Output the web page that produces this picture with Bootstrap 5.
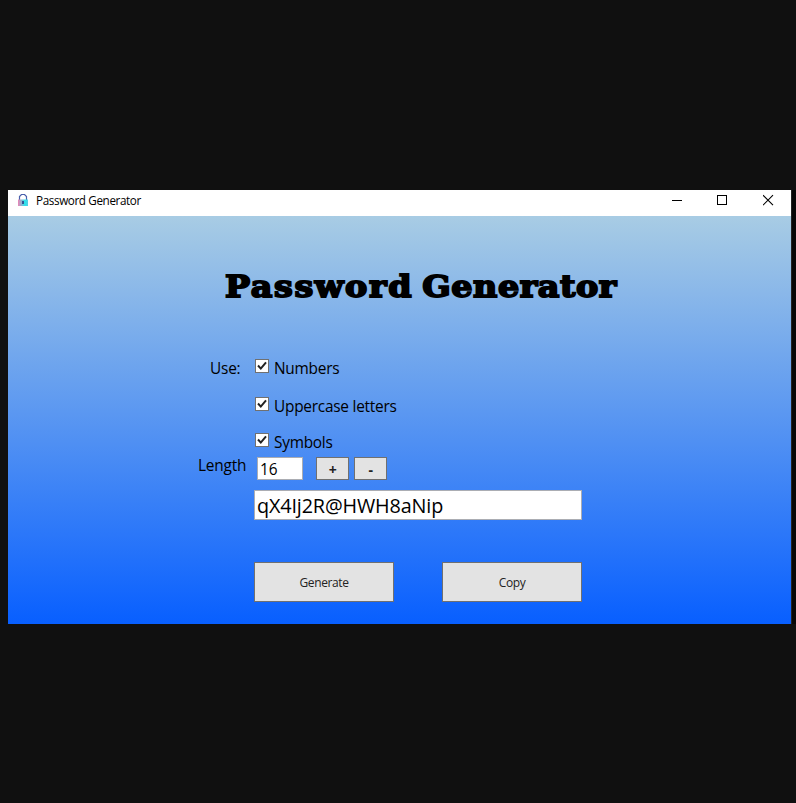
<!DOCTYPE html>
<html lang="en">
<head>
<meta charset="utf-8">
<meta name="viewport" content="width=device-width, initial-scale=1">
<title>Password Generator</title>
<link href="https://cdn.jsdelivr.net/npm/bootstrap@5.3.0/dist/css/bootstrap.min.css" rel="stylesheet">
<style>
body{background:#101010;color:#000;font-family:"Open Sans","Noto Sans",sans-serif;font-size:15.4px;line-height:20px;padding:190px 4px 0 8px;height:803px;overflow:hidden}
.window{width:784px;height:434px;border-right:1px solid #222;box-shadow:4px 0 #070707}
.titlebar{height:26px;background:#fff;padding:0 17px 0 9px;font-size:11.7px}
.titlebar .caption{line-height:21px;margin-left:6px;letter-spacing:-.38px}
.controls{gap:35px;margin-top:4px}
.controls svg,.lock{display:block}
.client{height:408px;background:linear-gradient(#a8cce4,#085fff);padding-top:50px}
h1{font:bold 29px/42px "DejaVu Serif",serif;margin:0 0 0 217px;white-space:nowrap;-webkit-text-stroke:1.8px #000}
h1 span{display:inline-block;letter-spacing:1.400px;word-spacing:-3.500px;transform:scaleX(1.150);transform-origin:left}
h1 .second{letter-spacing:.5px}
.tag{width:246px;flex:none;letter-spacing:-.2px}
.use{margin-left:202px;position:relative;top:1px}
.length{margin-left:190px;position:relative;top:-1px}
.options{margin-top:50px}
.option{height:38px}
.option.mid{height:36px}
.option.last{height:25px}
.option label{padding-top:1px;letter-spacing:-.24px}
.form-check-input.tick{width:14px;height:14px;margin:1px 5px 0 1px;border:1px solid #707070;border-radius:0;background:#fff;flex:none;float:none}
.form-check-input.tick:checked{background:#fff url("data:image/svg+xml,%3Csvg xmlns='http://www.w3.org/2000/svg' viewBox='0 0 12 12'%3E%3Cpath d='M2 5.5 4.8 8.6 10 2.4' fill='none' stroke='%23212121' stroke-width='2'/%3E%3C/svg%3E") center/12px no-repeat;border-color:#707070}
.form-control.box{border:1px solid #abadb3;border-radius:0;background:#fff;color:#000}
.len{width:46px;height:23px;padding:2px 2px 0;font-size:15.4px;line-height:19px;margin:0 13px 0 3px}
.result{width:328px;height:30px;padding:1px 2px 0;margin:10px 0 0 246px;font-size:19.8px;line-height:27px;letter-spacing:-.14px}
.btn.key{border:1px solid #707070;border-radius:0;background:#e3e3e3;color:#222;padding:2px 0 0;font-size:12px;letter-spacing:-.4px}
.btn.step{width:33px;height:23px;line-height:20px;font-size:14px;font-weight:700;margin-right:5px}
.wide{width:140px;height:40px}
.actions{gap:48px;margin:42px 0 0 246px}
</style>
<script src="https://cdn.jsdelivr.net/npm/bootstrap@5.3.0/dist/js/bootstrap.bundle.min.js"></script>
</head>
<body>
<main class="window">
<header class="titlebar d-flex align-items-start">
<svg class="lock mt-1" width="13" height="13" viewBox="0 0 13 13"><defs><linearGradient id="g" x2="1"><stop stop-color="#ef83b5"/><stop offset=".7" stop-color="#27e6ed"/><stop offset="1" stop-color="#55cde5"/></linearGradient></defs><path d="M2.500 6V2.500l2-2h3l2 2V6" fill="none" stroke="#4a60ac" stroke-width="1.200"/><path d="M1 5.500h10v6.500H1z" fill="url(#g)"/><path d="M5 7h2v3H5z" fill="#355596"/></svg>
<span class="caption">Password Generator</span>
<div class="controls d-flex ms-auto">
<svg width="11" height="12" shape-rendering="crispEdges"><path d="M1 6.500h10" stroke="#000"/></svg>
<svg width="11" height="12" shape-rendering="crispEdges"><path d="M.5 1.500h9v9h-9z" fill="none" stroke="#000"/></svg>
<svg width="11" height="12"><path d="m0 1.200 10 10M10 1.200l-10 10" stroke="#000" stroke-width="1.100"/></svg>
</div>
</header>
<section class="client">
<h1><span>Password <b class="second">Generator</b></span></h1>
<div class="options">
<div class="option d-flex"><span class="tag"><span class="use">Use:</span></span><input class="form-check-input tick" type="checkbox" checked id="n"><label for="n">Numbers</label></div>
<div class="option mid d-flex"><span class="tag"></span><input class="form-check-input tick" type="checkbox" checked id="u"><label for="u">Uppercase letters</label></div>
<div class="option last d-flex"><span class="tag"></span><input class="form-check-input tick" type="checkbox" checked id="s"><label for="s">Symbols</label></div>
</div>
<div class="d-flex"><label class="tag" for="len"><span class="length">Length</span></label><input id="len" class="form-control box len" value="16"><button class="btn key step">+</button><button class="btn key step">-</button></div>
<input class="form-control box result" value="qX4Ij2R@HWH8aNip" aria-label="Password">
<div class="actions d-flex"><button class="btn key wide">Generate</button><button class="btn key wide">Copy</button></div>
</section>
</main>
</body>
</html>
